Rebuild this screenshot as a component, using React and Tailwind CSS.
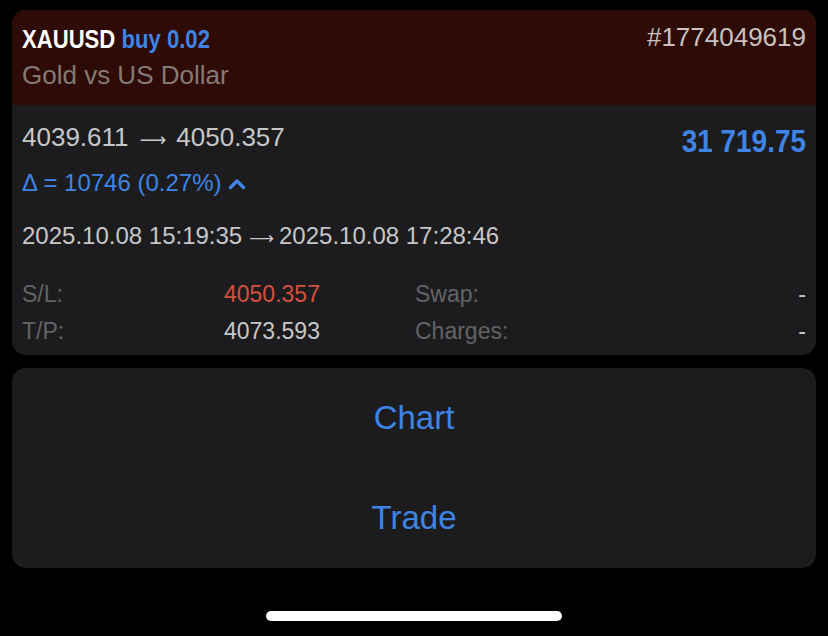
const sans = "font-['Liberation_Sans',Arial,sans-serif]";

function Arrow({ className }) {
  return (
    <span className={`font-['DejaVu_Sans',sans-serif] text-[0.72em] leading-none ${className}`}>
      ⟶
    </span>
  );
}

function ChevronUp() {
  return (
    <svg
      width="18"
      height="12"
      viewBox="0 0 18 12"
      fill="none"
      stroke="#3f84e5"
      strokeWidth="3.4"
      strokeLinecap="round"
      strokeLinejoin="round"
      className="ml-[6px] mt-[2px]"
    >
      <path d="M2.5 9.5 9 3l6.5 6.5" />
    </svg>
  );
}

function InfoRow({ label, value, valueClass, label2, value2 }) {
  return (
    <div className="grid h-[37px] grid-cols-[202px_191px_1fr_auto] items-center text-[23px] leading-[37px]">
      <span className="text-[#636366]">{label}</span>
      <span className={valueClass}>{value}</span>
      <span className="text-[#636366]">{label2}</span>
      <span className="text-[#c7c7c9]">{value2}</span>
    </div>
  );
}

export default function App() {
  return (
    <div className={`min-h-[636px] w-[828px] bg-black px-[12px] pt-[10px] ${sans}`}>
      <div className="overflow-hidden rounded-[14px] bg-[#1c1c1e]">
        {/* header */}
        <div className="flex h-[95px] items-start justify-between bg-[#2e0b06] px-[10px] pt-[13px]">
          <div>
            <div className="origin-left scale-x-[0.85] whitespace-nowrap text-[26px] font-bold leading-[32px]">
              <span className="text-white">XAUUSD</span>{" "}
              <span className="text-[#3f84e5]">buy 0.02</span>
            </div>
            <div className="mt-[5px] text-[26px] leading-[30px] text-[#857a77]">
              Gold vs US Dollar
            </div>
          </div>
          <div className="-mt-[2px] text-[26px] leading-[32px] text-[#c9c2c0]">
            #1774049619
          </div>
        </div>

        {/* body */}
        <div className="px-[10px] pb-[5px] pt-[17px]">
          <div className="flex items-start justify-between">
            <div>
              <div className="h-[30px] text-[26px] leading-[30px] text-[#c7c7c9]">
                4039.611<Arrow className="ml-[11px] mr-[10px]" />4050.357
              </div>
              <div className="mt-[18px] flex items-center text-[24px] leading-[26px] text-[#3f84e5]">
                <span>Δ = 10746 (0.27%)</span>
                <ChevronUp />
              </div>
            </div>
            <div className="mt-[2px] origin-right scale-x-[0.9] whitespace-nowrap text-[31px] font-bold leading-[36px] text-[#3f84e5]">
              31 719.75
            </div>
          </div>

          <div className="mt-[26px] h-[28px] text-[24px] leading-[28px] text-[#c7c7c9]">
            2025.10.08 15:19:35<Arrow className="ml-[7px] mr-[5px]" />2025.10.08 17:28:46
          </div>

          <div className="mt-[26px]">
            <InfoRow
              label="S/L:"
              value="4050.357"
              valueClass="text-[#d5503f]"
              label2="Swap:"
              value2="-"
            />
            <InfoRow
              label="T/P:"
              value="4073.593"
              valueClass="text-[#c7c7c9]"
              label2="Charges:"
              value2="-"
            />
          </div>
        </div>
      </div>

      {/* actions */}
      <div className="mt-[13px] rounded-[14px] bg-[#1c1c1e]">
        <div className="flex h-[100px] items-center justify-center text-[33px] leading-[100px] text-[#3f84e5]">
          Chart
        </div>
        <div className="flex h-[100px] items-center justify-center text-[33px] leading-[100px] text-[#3f84e5]">
          Trade
        </div>
      </div>

      <div className="mx-auto mt-[43px] h-[10px] w-[296px] rounded-full bg-white" />
    </div>
  );
}
